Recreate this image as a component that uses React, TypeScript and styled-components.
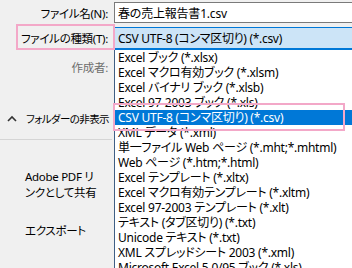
import React from 'react';
import styled, { createGlobalStyle } from 'styled-components';

const Global = createGlobalStyle`
  html, body { margin: 0; padding: 0; background: #f0f0f0; }
  body {
    font-family: "Noto Sans", "Noto Sans CJK JP", sans-serif;
    font-size: 12px;
    font-feature-settings: "palt";
  }
`;

const Dialog = styled.div`
  position: relative;
  width: 352px;
  height: 268px;
  overflow: hidden;
  background: #f0f0f0;
  display: grid;
  grid-template-columns: 114px 1fr;
  grid-template-rows: 21px 24px 1fr;
  row-gap: 3px;
  padding-top: 2px;
  box-sizing: border-box;
  color: #000;
`;

const Label = styled.div<{ $muted?: boolean }>`
  display: flex;
  align-items: center;
  justify-content: flex-end;
  padding-right: 6px;
  font-size: 11.5px;
  letter-spacing: -0.3px;
  color: ${p => (p.$muted ? '#6d6d6d' : '#000')};
  white-space: nowrap;
`;

const Input = styled.div`
  display: flex;
  align-items: center;
  background: #fff;
  border: 1px solid #7a7a7a;
  border-right: none;
  padding-left: 3px;
  letter-spacing: -0.2px;
  white-space: nowrap;
`;

const Combo = styled.div`
  display: flex;
  align-items: center;
  background: #cce4f7;
  border-top: 1px solid #0078d7;
  border-left: 1px solid #0078d7;
  border-bottom: 2px solid #0078d7;
  padding-left: 3px;
  margin-top: 1px;
  letter-spacing: -0.3px;
  white-space: nowrap;
`;

const Side = styled.div`
  display: flex;
  flex-direction: column;
  margin-top: -3px;
`;

const Author = styled(Label)`
  height: 28px;
  margin-top: 3px;
`;

const FolderToggle = styled.div`
  display: flex;
  align-items: center;
  gap: 9px;
  height: 20px;
  margin-top: 27px;
  padding-left: 7px;
  font-size: 10.5px;
  letter-spacing: -0.6px;
  white-space: nowrap;
  svg { flex-shrink: 0; }
`;

const Divider = styled.div`
  height: 1px;
  background: #d5d5d5;
  margin: 11px 2px 0 0;
`;

const SideItem = styled.div<{ $gap: number }>`
  margin-top: ${p => p.$gap}px;
  padding-left: 25px;
  line-height: 16px;
  font-size: 11.5px;
  letter-spacing: -0.3px;
  white-space: nowrap;
`;

const List = styled.div`
  margin-top: -3px;
  background: #fff;
  border-left: 1px solid #3f5f85;
  overflow: hidden;
`;

const Item = styled.div<{ $selected?: boolean }>`
  height: 15px;
  line-height: 15px;
  padding-left: 3px;
  letter-spacing: -0.25px;
  white-space: nowrap;
  background: ${p => (p.$selected ? '#0078d7' : 'transparent')};
  color: ${p => (p.$selected ? '#fff' : '#000')};
`;

const Mark = styled.div<{ $x: number; $y: number; $w: number; $h: number }>`
  position: absolute;
  left: ${p => p.$x}px;
  top: ${p => p.$y}px;
  width: ${p => p.$w}px;
  height: ${p => p.$h}px;
  border: 2px solid #f3a8c8;
  box-sizing: border-box;
  pointer-events: none;
`;

const types = [
  'Excel ブック (*.xlsx)',
  'Excel マクロ有効ブック (*.xlsm)',
  'Excel バイナリ ブック (*.xlsb)',
  'Excel 97-2003 ブック (*.xls)',
  'CSV UTF-8 (コンマ区切り) (*.csv)',
  'XML データ (*.xml)',
  '単一ファイル Web ページ (*.mht;*.mhtml)',
  'Web ページ (*.htm;*.html)',
  'Excel テンプレート (*.xltx)',
  'Excel マクロ有効テンプレート (*.xltm)',
  'Excel 97-2003 テンプレート (*.xlt)',
  'テキスト (タブ区切り) (*.txt)',
  'Unicode テキスト (*.txt)',
  'XML スプレッドシート 2003 (*.xml)',
  'Microsoft Excel 5.0/95 ブック (*.xls)',
];

const Chevron = () => (
  <svg width="10" height="7" viewBox="0 0 10 7">
    <path d="M1 6 L5 2 L9 6" fill="none" stroke="#333" strokeWidth="1.6" />
  </svg>
);

const App = () => (
  <>
    <Global />
    <Dialog>
      <Label>ファイル名(N):</Label>
      <Input>春の売上報告書1.csv</Input>
      <Label>ファイルの種類(T):</Label>
      <Combo>CSV UTF-8 (コンマ区切り) (*.csv)</Combo>
      <Side>
        <Author $muted>作成者:</Author>
        <FolderToggle>
          <Chevron />
          <span>フォルダーの非表示</span>
        </FolderToggle>
        <Divider />
        <SideItem $gap={29}>Adobe PDF リ<br />ンクとして共有</SideItem>
        <SideItem $gap={22}>エクスポート</SideItem>
      </Side>
      <List>
        {types.map((t, i) => (
          <Item key={t} $selected={i === 4}>{t}</Item>
        ))}
      </List>
      <Mark $x={16} $y={24} $w={99} $h={26} />
      <Mark $x={113} $y={103} $w={232} $h={28} />
    </Dialog>
  </>
);

export default App;
